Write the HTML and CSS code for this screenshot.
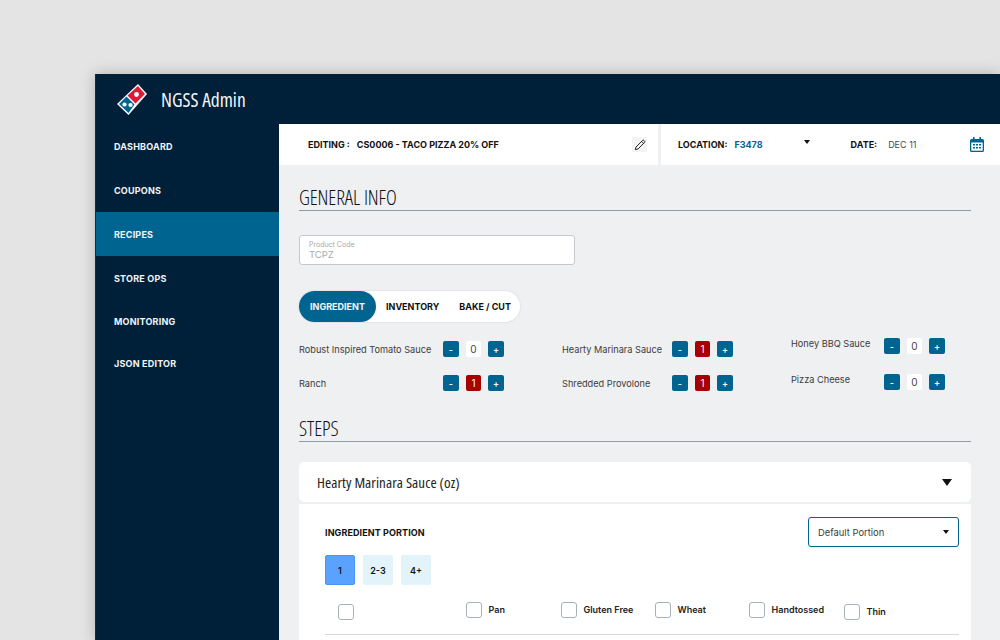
FILE: index.html
```html
<!DOCTYPE html>
<html lang="en">
<head>
<meta charset="utf-8">
<title>NGSS Admin</title>
<link rel="stylesheet" href="styles.css">
</head>
<body>
<div class="window">
  <header class="appbar">
    <svg class="logo" width="32" height="34" viewBox="0 0 32 34">
      <polygon points="22,1 31,11 12.5,32 1,21" fill="#fff"/>
      <polygon points="22,3 29,11 19.5,20.5 11.5,12.5" fill="#e31837"/>
      <polygon points="10.5,13.5 18.5,21.5 12.5,30 3,21" fill="#006491"/>
      <circle cx="20.5" cy="11.5" r="2.4" fill="#fff"/>
      <circle cx="8.5" cy="21.5" r="2.1" fill="#fff"/>
      <circle cx="14.5" cy="22" r="2.1" fill="#fff"/>
    </svg>
    <span class="brand">NGSS Admin</span>
  </header>
  <div class="shell">
    <nav class="sidebar">
      <a class="navitem">DASHBOARD</a>
      <a class="navitem">COUPONS</a>
      <a class="navitem active">RECIPES</a>
      <a class="navitem">STORE OPS</a>
      <a class="navitem short">MONITORING</a>
      <a class="navitem short">JSON EDITOR</a>
    </nav>
    <main class="main">
      <div class="topbar">
        <div class="editing">
          <span class="strong">EDITING :</span>
          <span class="strong code">CS0006 - TACO PIZZA 20% OFF</span>
          <span class="pencil">
            <svg width="12" height="12" viewBox="0 0 12 12"><path d="M1.300 10.700 2 8 8.600 1.400a.9.9 0 0 1 1.300 0l.7.7a.9.9 0 0 1 0 1.300L4 10l-2.700.7ZM7.600 2.400l2 2" fill="none" stroke="#111" stroke-width=".9" stroke-linejoin="round"/></svg>
          </span>
        </div>
        <div class="context">
          <span class="strong">LOCATION:</span>
          <span class="strong location">F3478</span>
          <span class="minicaret"></span>
          <span class="strong datelabel">DATE:</span>
          <span class="date">DEC 11</span>
          <svg class="calendar" width="14" height="15" viewBox="0 0 14 15">
            <path d="M3 0h1.600v2H9.400V0H11v2h1.400A1.600 1.600 0 0 1 14 3.600v9.800a1.600 1.600 0 0 1-1.600 1.600H1.600A1.600 1.600 0 0 1 0 13.400V3.600A1.600 1.600 0 0 1 1.600 2H3Z" fill="#006491"/>
            <rect x="1.300" y="5.500" width="11.400" height="8.200" fill="#fff"/>
            <path d="M3 7h2v1.500H3ZM6 7h2v1.500H6ZM9 7h2v1.500H9ZM3 10h2v1.500H3ZM6 10h2v1.500H6ZM9 10h2v1.500H9Z" fill="#006491"/>
          </svg>
        </div>
      </div>
      <div class="content">
        <h2 class="section">GENERAL INFO</h2>
        <div class="field">
          <span class="fieldlabel">Product Code</span>
          <span class="fieldvalue">TCPZ</span>
        </div>
        <div class="tabs">
          <span class="tab selected">INGREDIENT</span>
          <span class="tab">INVENTORY</span>
          <span class="tab">BAKE / CUT</span>
        </div>
        <div class="ingredients">
          <div class="col col1">
            <div class="row"><span class="name">Robust Inspired Tomato Sauce</span><span class="btn">-</span><span class="qty">0</span><span class="btn">+</span></div>
            <div class="row"><span class="name">Ranch</span><span class="btn">-</span><span class="qty on">1</span><span class="btn">+</span></div>
          </div>
          <div class="col col2">
            <div class="row"><span class="name">Hearty Marinara Sauce</span><span class="btn">-</span><span class="qty on">1</span><span class="btn">+</span></div>
            <div class="row"><span class="name">Shredded Provolone</span><span class="btn">-</span><span class="qty on">1</span><span class="btn">+</span></div>
          </div>
          <div class="col col3">
            <div class="row"><span class="name">Honey BBQ Sauce</span><span class="btn">-</span><span class="qty">0</span><span class="btn">+</span></div>
            <div class="row"><span class="name">Pizza Cheese</span><span class="btn">-</span><span class="qty">0</span><span class="btn">+</span></div>
          </div>
        </div>
        <h2 class="section steps">STEPS</h2>
        <div class="accordion">
          <span class="acctitle">Hearty Marinara Sauce (oz)</span>
          <span class="bigcaret"></span>
        </div>
        <div class="panel">
          <div class="panelhead">
            <span class="strong portion">INGREDIENT PORTION</span>
            <div class="select"><span>Default Portion</span><span class="minicaret selectcaret"></span></div>
          </div>
          <div class="sizes">
            <span class="size current">1</span>
            <span class="size">2-3</span>
            <span class="size">4+</span>
          </div>
          <div class="checks">
            <label class="check c0"><span class="box"></span></label>
            <label class="check c1"><span class="box"></span>Pan</label>
            <label class="check c2"><span class="box"></span>Gluten Free</label>
            <label class="check c3"><span class="box"></span>Wheat</label>
            <label class="check c4"><span class="box"></span>Handtossed</label>
            <label class="check c5"><span class="box"></span>Thin</label>
          </div>
        </div>
      </div>
    </main>
  </div>
</div>
</body>
</html>
```

FILE: styles.css
```css
* { box-sizing: border-box; }
html, body { margin: 0; height: 640px; overflow: hidden; }
body {
  background: #e4e4e4;
  padding: 74px 0 0 95px;
  font-family: Inter, "Liberation Sans", sans-serif;
  color: #111;
}
.window {
  width: 905px;
  height: 566px;
  background: #00203a;
  border-left: 1px solid #2a1c4c;
  box-shadow: 0 0 14px rgba(0, 0, 0, .22);
  display: flex;
  flex-direction: column;
  overflow: hidden;
}
.appbar {
  height: 50px;
  flex: none;
  display: flex;
  align-items: center;
  padding-left: 20px;
}
.logo { margin-top: 1px; }
.brand {
  margin-left: 13px;
  color: #f2f4f6;
  font-family: "Open Sans", sans-serif;
  font-stretch: 75%;
  font-size: 19.500px;
  font-weight: 400;
}
.shell { flex: 1; display: flex; min-height: 0; }
.sidebar { width: 183px; flex: none; display: flex; flex-direction: column; }
.navitem {
  height: 44px;
  padding-left: 18px;
  display: flex;
  align-items: center;
  font-size: 9px;
  font-weight: 700;
  color: #f2f4f6;
  letter-spacing: .2px;
  white-space: nowrap;
}
.navitem.short { height: 42.500px; }
.navitem.active { background: #006491; }
.main { flex: 1; min-width: 0; background: #eff0f2; display: flex; flex-direction: column; }
.topbar { height: 41px; flex: none; display: flex; background: #fff; }
.strong { font-size: 9px; font-weight: 700; color: #111; white-space: nowrap; }
.editing {
  width: 382px;
  display: flex;
  align-items: center;
  padding-left: 29px;
  border-right: 3px solid #eff0f2;
}
.code { margin-left: 7px; }
.pencil {
  margin-left: auto;
  margin-right: 11px;
  width: 15px;
  height: 15px;
  background: #f4f4f4;
  display: flex;
  align-items: center;
  justify-content: center;
}
.context { flex: 1; display: flex; align-items: center; padding-left: 17px; min-width: 0; }
.location { color: #006491; margin-left: 7px; }
.minicaret {
  width: 0;
  height: 0;
  border-left: 3.500px solid transparent;
  border-right: 3.500px solid transparent;
  border-top: 4px solid #111;
  margin: -6px 0 0 41px;
}
.datelabel { margin-left: 41px; }
.date { margin-left: 11px; font-size: 9px; color: #4a4a4a; white-space: nowrap; }
.calendar { margin-left: 54px; flex: none; }
.content { flex: 1; min-height: 0; padding: 20px 29px 0 20px; }
.section {
  margin: 0;
  height: 26px;
  border-bottom: 1px solid #8f9bab;
  font-family: "Open Sans", sans-serif;
  font-stretch: 75%;
  font-weight: 360;
  font-size: 20.500px;
  letter-spacing: -.1px;
  line-height: 24px;
  color: #111;
}
.field {
  margin-top: 24px;
  width: 276px;
  height: 30px;
  background: #fff;
  border: 1px solid #c6c9cd;
  border-radius: 3px;
  padding: 4px 9px;
  display: flex;
  flex-direction: column;
  color: #a9a9a9;
}
.fieldlabel { font-size: 7px; line-height: 9px; }
.fieldvalue { font-size: 9.500px; line-height: 12px; }
.tabs {
  margin-top: 26px;
  width: 221px;
  height: 31px;
  background: #fff;
  border-radius: 16px;
  box-shadow: 0 0 1px 1px #e2e4e7;
  display: flex;
  align-items: center;
}
.tab { font-size: 9px; font-weight: 700; color: #111; letter-spacing: 0; margin: 0 10px; white-space: nowrap; }
.tab.selected {
  flex: none;
  margin: 0;
  width: 77px;
  height: 31px;
  border-radius: 16px;
  background: #006491;
  color: #f2f4f6;
  display: flex;
  align-items: center;
  justify-content: center;
}
.ingredients { margin-top: 10px; display: flex; height: 84px; }
.col { display: flex; flex-direction: column; }
.col1 { width: 263px; }
.col2 { width: 229px; }
.row { display: flex; align-items: center; height: 34px; }
.col3 { margin-top: -4px; }
.col3 .row { height: 36px; }
.col3 .name { margin-bottom: 6px; }
.name { font-size: 9.200px; color: #3c3c3c; white-space: nowrap; }
.col1 .name { width: 144px; }
.col2 .name { width: 110px; }
.col3 .name { width: 93px; }
.btn, .qty {
  width: 15.500px;
  height: 15.500px;
  border-radius: 2px;
  display: flex;
  align-items: center;
  justify-content: center;
  font-size: 10px;
}
.btn { background: #006491; color: #fff; font-weight: 600; font-size: 9px; }
.qty { background: #fff; color: #444; margin: 0 7.200px; }
.qty.on { background: #a80000; color: #fff; }
.accordion {
  margin-top: 20px;
  height: 40px;
  background: #fff;
  border-radius: 5px;
  display: flex;
  align-items: center;
  justify-content: space-between;
  padding: 0 19px 0 18px;
}
.acctitle {
  font-family: "Open Sans", sans-serif;
  font-stretch: 75%;
  font-weight: 400;
  font-size: 15px;
  letter-spacing: .08px;
  color: #222;
}
.bigcaret {
  width: 0;
  height: 0;
  border-left: 5.500px solid transparent;
  border-right: 5.500px solid transparent;
  border-top: 7px solid #111;
}
.panel { margin-top: 2px; height: 200px; background: #fff; padding: 13px 12px 0 26px; }
.panelhead { display: flex; justify-content: space-between; align-items: center; }
.portion { letter-spacing: .1px; }
.select {
  width: 151px;
  height: 30px;
  border: 1.500px solid #006491;
  border-radius: 3px;
  padding: 0 9px;
  display: flex;
  align-items: center;
  justify-content: space-between;
  font-size: 9.400px;
  color: #3c3c3c;
}
.selectcaret { margin: 0; }
.sizes { margin-top: 8px; display: flex; gap: 8px; }
.size {
  width: 30px;
  height: 30px;
  border-radius: 2px;
  background: #e2f4f9;
  display: flex;
  align-items: center;
  justify-content: center;
  font-size: 9px;
  font-weight: 600;
}
.size.current { background: #5aa2ff; border: 1px solid #4a94f2; }
.checks {
  margin-top: 17px;
  height: 33px;
  border-bottom: 1px solid #d5d7da;
  display: grid;
  grid-template-columns: 141px 95px 94px 94px 95px 1fr;
}
.check { display: flex; align-items: flex-start; gap: 7px; font-size: 9px; font-weight: 600; line-height: 15px; color: #222; }
.box { width: 15.500px; height: 15.500px; border: 1px solid #a6b1bc; border-radius: 3px; background: #fff; flex: none; }
.c0 { padding: 2px 0 0 13px; }
.c5 { padding-top: 2px; }
```
